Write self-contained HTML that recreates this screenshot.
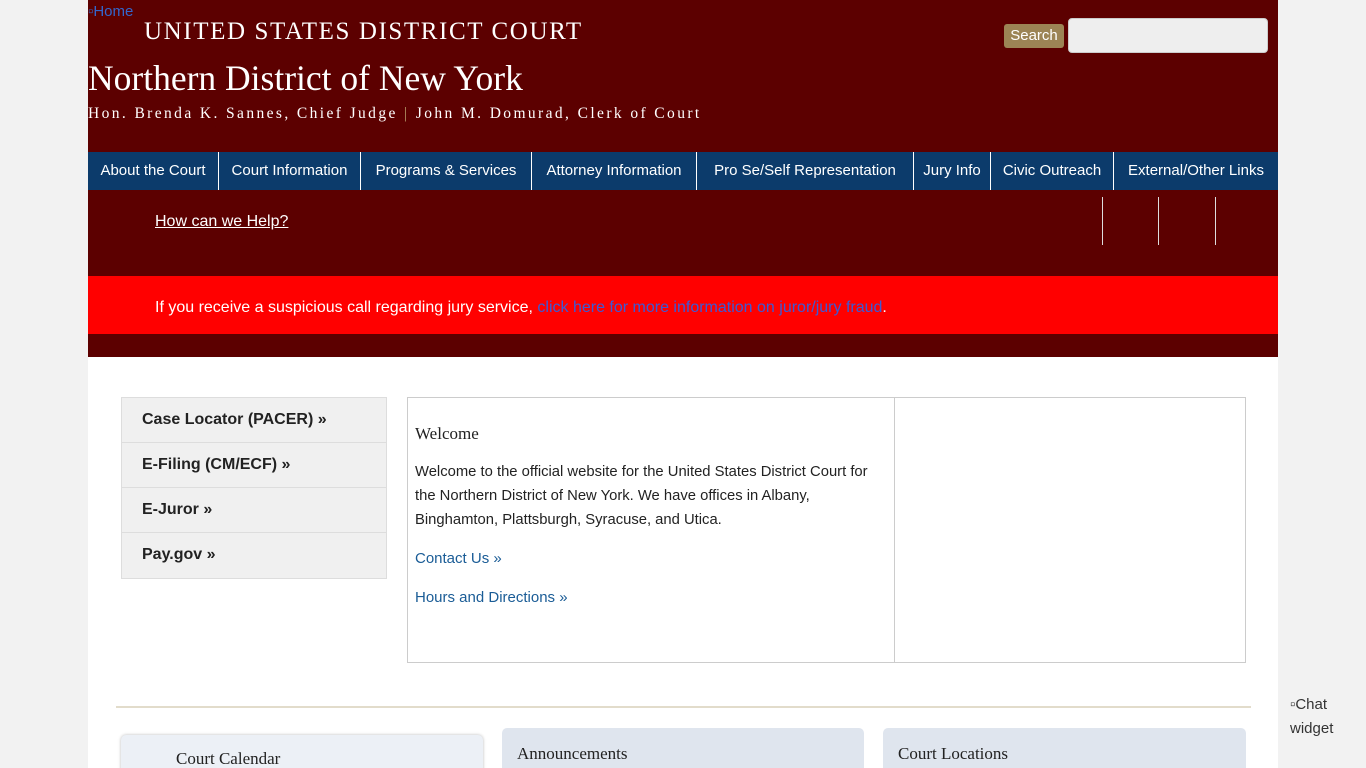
<!DOCTYPE html>
<html><head><meta charset="utf-8"><style>
*{box-sizing:border-box;margin:0;padding:0}
html,body{width:1366px;height:768px;overflow:hidden}
body{background:#f2f2f2;font-family:"Liberation Sans",sans-serif;position:relative}
#wrap{position:absolute;left:88px;top:0;width:1190px;height:768px;background:#fff;overflow:hidden}
.hdr{position:absolute;left:0;top:0;width:1190px;height:152px;background:#5c0000}
.serif{font-family:"Liberation Serif",serif;color:#fff;position:absolute;white-space:nowrap}
.nav{position:absolute;left:0;top:152px;width:1190px;height:38px;background:#0c3b6b;display:flex}
.nav div{color:#fff;font-size:15px;line-height:38px;padding:0;border-right:1px solid #fff;text-align:center;white-space:nowrap;flex:none}
.band{position:absolute;left:0;top:190px;width:1190px;height:167px;background:#5c0000}
.alert{position:absolute;left:0;top:276px;width:1190px;height:58px;background:#f00;color:#fff;font-size:16px;padding:23px 0 0 67px}
.side{position:absolute;left:33px;top:397px;width:266px;border:1px solid #ddd;background:#f0f0f0}
.side div{height:45px;border-bottom:1px solid #ddd;font-weight:bold;font-size:16px;padding:13px 0 0 20px;color:#222}
.box{position:absolute;left:319px;top:397px;width:839px;height:266px;border:1px solid #ccc}
.card{position:absolute;background:#dfe5ee;border-radius:5px;font-family:"Liberation Serif",serif;font-size:17px;color:#222}
</style></head><body>
<div id="wrap">
<div class="hdr">
<div style="position:absolute;left:0;top:3px;color:#3366cc;font-size:15px">▫Home</div>
<div class="serif" style="left:56px;top:18px;font-size:25px;letter-spacing:1.6px">UNITED STATES DISTRICT COURT</div>
<div class="serif" style="left:0;top:57px;font-size:35.5px">Northern District of New York</div>
<div class="serif" style="left:0;top:105px;font-size:15.5px;letter-spacing:2.4px">Hon. Brenda K. Sannes, Chief Judge <span style="color:#b89a6a">|</span> John M. Domurad, Clerk of Court</div>
<div style="position:absolute;left:916px;top:24px;width:60px;height:24px;background:#9c8455;border-radius:3px;color:#fff;font-size:15px;text-align:center;line-height:24px">Search</div>
<div style="position:absolute;left:980px;top:18px;width:200px;height:35px;background:#eee;border-radius:4px;border:1px solid #ccc"></div>
</div>
<div class="nav">
<div style="width:131px">About the Court</div><div style="width:142px">Court Information</div><div style="width:171px">Programs &amp; Services</div><div style="width:165px">Attorney Information</div><div style="width:217px">Pro Se/Self Representation</div><div style="width:77px">Jury Info</div><div style="width:123px">Civic Outreach</div><div style="width:164px;border:0">External/Other Links</div>
</div>
<div class="band">
<div style="position:absolute;left:67px;top:23px;color:#fff;font-size:16px;text-decoration:underline">How can we Help?</div>
<div style="position:absolute;left:1014px;top:7px;width:1px;height:48px;background:#ddd"></div>
<div style="position:absolute;left:1070px;top:7px;width:1px;height:48px;background:#ddd"></div>
<div style="position:absolute;left:1127px;top:7px;width:1px;height:48px;background:#ddd"></div>
</div>
<div class="alert">If you receive a suspicious call regarding jury service, <span style="color:#3b5bd6">click here for more information on juror/jury fraud</span>.</div>
<div class="side"><div>Case Locator (PACER) »</div><div>E-Filing (CM/ECF) »</div><div>E-Juror »</div><div style="border:0">Pay.gov »</div></div>
<div class="box">
<div style="position:absolute;left:486px;top:0;width:1px;height:264px;background:#ccc"></div>
<div style="position:absolute;left:7px;top:26px;font-family:'Liberation Serif',serif;font-size:17px;color:#222">Welcome</div>
<div style="position:absolute;left:7px;top:62px;width:462px;font-size:14.8px;line-height:24px;color:#222">Welcome to the official website for the United States District Court for the Northern District of New York. We have offices in Albany, Binghamton, Plattsburgh, Syracuse, and Utica.</div>
<div style="position:absolute;left:7px;top:152px;font-size:15px;color:#1a5c96">Contact Us »</div>
<div style="position:absolute;left:7px;top:191px;font-size:15px;color:#1a5c96">Hours and Directions »</div>
</div>
<div style="position:absolute;left:28px;top:706px;width:1135px;height:2px;background:#e2dccb"></div>
<div class="card" style="left:33px;top:735px;width:362px;height:40px;background:#ecf0f6;box-shadow:0 0 3px #bbb;padding:14px 0 0 55px">Court Calendar</div>
<div class="card" style="left:414px;top:728px;width:362px;height:50px;padding:16px 0 0 15px">Announcements</div>
<div class="card" style="left:795px;top:728px;width:363px;height:50px;padding:16px 0 0 15px">Court Locations</div>
</div>
<div style="position:absolute;left:1290px;top:693px;font-size:15px;color:#333;line-height:24px">▫Chat<br>widget</div>
</body></html>
